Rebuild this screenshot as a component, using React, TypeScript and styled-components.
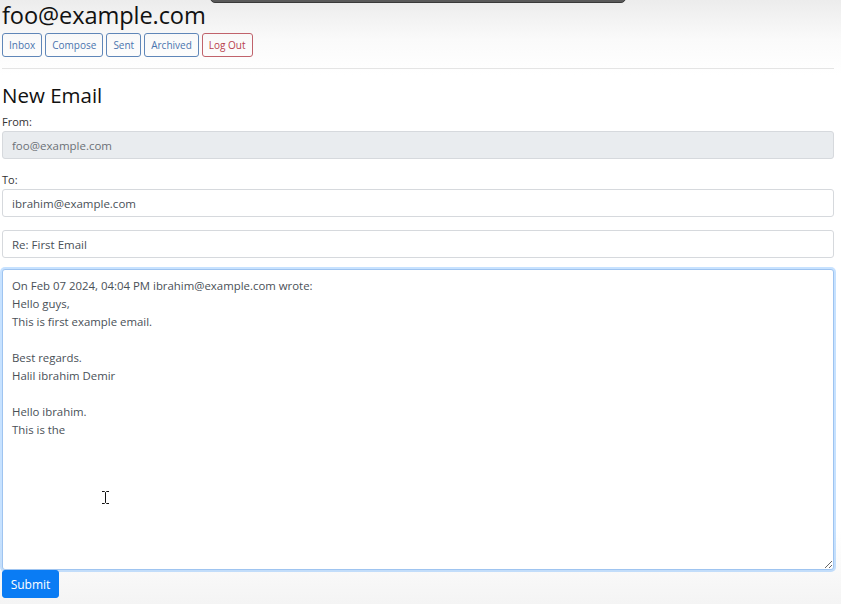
import React from "react";
import styled, { createGlobalStyle } from "styled-components";

const GlobalStyle = createGlobalStyle`
  html, body { margin: 0; padding: 0; }
  body {
    font-family: "Open Sans", "Noto Sans", sans-serif;
    color: #212529;
    background: linear-gradient(to bottom, #ececec 0px, #fafafa 40px, #ffffff 75px, #ffffff 530px, #f4f4f4 604px);
    min-height: 604px;
  }
  * { box-sizing: border-box; }
`;

const Page = styled.div`
  position: relative;
  width: 841px;
  height: 604px;
  overflow: hidden;
  padding: 0 7px 0 2px;
  display: flex;
  flex-direction: column;
`;

const TopBar = styled.div`
  position: absolute;
  left: 210px;
  top: -4px;
  width: 416px;
  height: 7px;
  background: #5a5a5a;
  border-radius: 0 0 5px 5px;
  border: 1px solid #3a3a3a;
`;

const Title = styled.h1`
  margin: 0;
  font-size: 23.6px;
  line-height: 31px;
  font-weight: 400;
  color: #111;
  letter-spacing: -0.1px;
`;

const Nav = styled.nav`
  display: flex;
  gap: 3px;
  margin-top: 2px;
`;

const NavButton = styled.button<{ $danger?: boolean }>`
  height: 24px;
  padding: 0 6px;
  font-family: inherit;
  font-size: 10px;
  background: transparent;
  border-radius: 3px;
  border: 1px solid ${(p) => (p.$danger ? "#c0626b" : "#5f86b8")};
  color: ${(p) => (p.$danger ? "#b8414c" : "#4a74ae")};
  cursor: pointer;
`;

const Rule = styled.hr`
  margin: 11px 0 0 0;
  border: 0;
  border-top: 1px solid #e4e4e4;
`;

const Heading = styled.h2`
  margin: 11px 0 0 0;
  font-size: 20.5px;
  line-height: 31px;
  font-weight: 400;
  color: #111;
`;

const Form = styled.form`
  display: flex;
  flex-direction: column;
`;

const Label = styled.label`
  font-size: 11px;
  line-height: 15px;
  color: #333;
  margin-top: 3px;
  margin-bottom: 2px;
`;

const Input = styled.input<{ $gap?: number }>`
  height: 28px;
  width: 100%;
  padding: 0 9px;
  font-family: inherit;
  font-size: 11.5px;
  color: #495057;
  background: #fff;
  border: 1px solid #d6d9dd;
  border-radius: 3px;
  margin-bottom: ${(p) => p.$gap ?? 0}px;
  &:disabled { background: #e9ecef; color: #6c7177; }
`;

const Body = styled.textarea`
  height: 301px;
  width: 100%;
  padding: 7px 9px;
  font-family: inherit;
  font-size: 11.4px;
  line-height: 18px;
  color: #495057;
  background: #fff;
  border: 1px solid #9fc4f0;
  border-radius: 3px;
  box-shadow: 0 0 0 2px rgba(0, 123, 255, 0.22);
  resize: vertical;
  outline: none;
`;

const Submit = styled.button`
  align-self: flex-start;
  width: 57px;
  height: 28px;
  padding: 0;
  font-family: inherit;
  font-size: 12px;
  color: #fff;
  background: #0a7cf4;
  border: 1px solid #0a7cf4;
  border-radius: 3px;
`;

const Cursor = styled.svg`
  position: absolute;
  left: 101px;
  top: 491px;
`;

const bodyText = `On Feb 07 2024, 04:04 PM ibrahim@example.com wrote:
Hello guys,
This is first example email.

Best regards.
Halil ibrahim Demir

Hello ibrahim.
This is the`;

export default function App() {
  return (
    <>
      <GlobalStyle />
      <Page>
        <TopBar />
        <Title>foo@example.com</Title>
        <Nav>
          <NavButton>Inbox</NavButton>
          <NavButton>Compose</NavButton>
          <NavButton>Sent</NavButton>
          <NavButton>Archived</NavButton>
          <NavButton $danger>Log Out</NavButton>
        </Nav>
        <Rule />
        <Heading>New Email</Heading>
        <Form onSubmit={(e) => e.preventDefault()}>
          <Label>From:</Label>
          <Input disabled value="foo@example.com" $gap={10} readOnly />
          <Label>To:</Label>
          <Input defaultValue="ibrahim@example.com" $gap={13} />
          <Input defaultValue="Re: First Email" $gap={11} />
          <Body defaultValue={bodyText} />
          <Submit type="submit">Submit</Submit>
        </Form>
        <Cursor width="9" height="13" viewBox="0 0 9 13">
          <path d="M1 0.5h2.5l1 1 1-1H8M4.5 1.5v10M1 12.5h2.5l1-1 1 1H8" fill="none" stroke="#111" strokeWidth="1" />
        </Cursor>
      </Page>
    </>
  );
}
